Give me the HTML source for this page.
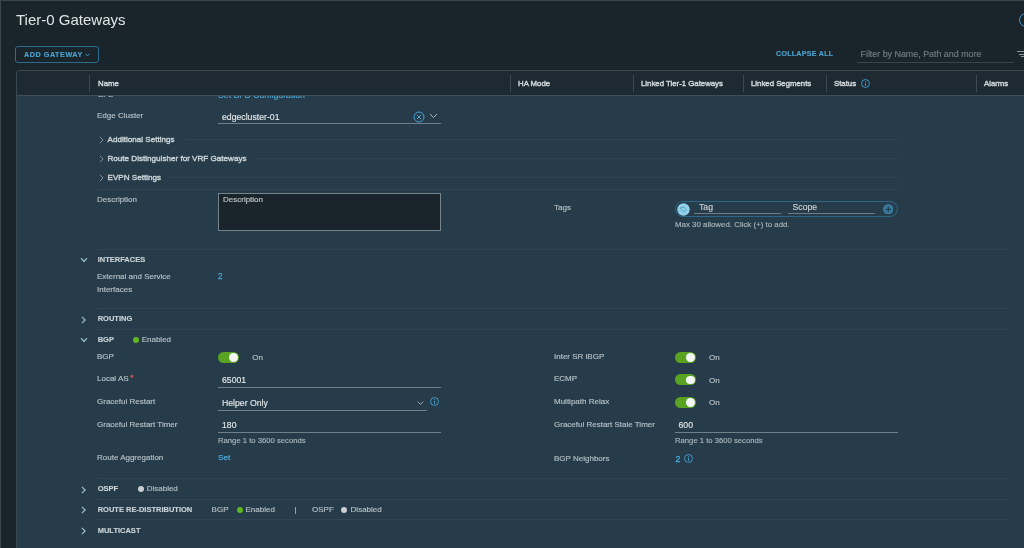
<!DOCTYPE html>
<html><head><meta charset="utf-8">
<style>
*{box-sizing:border-box;margin:0;padding:0}
html,body{width:1024px;height:548px;overflow:hidden;background:#1a242b;font-family:"Liberation Sans",sans-serif}
#root{position:absolute;left:0;top:0;width:1024px;height:548px;background:#1a242b;overflow:hidden;will-change:transform}
.a{position:absolute;white-space:nowrap;line-height:1;-webkit-text-stroke:0.15px currentColor}
svg{display:block}
</style></head><body>
<div id="root">
<div style="position:absolute;left:0px;top:0px;width:1024px;height:1px;background:#3a454c"></div>
<div style="position:absolute;left:0px;top:0px;width:1px;height:548px;background:#3a454c"></div>
<div class="a" style="left:16px;top:12.20px;font-size:15px;color:#e1e5e8;-webkit-text-stroke:0">Tier-0 Gateways</div>
<div style="position:absolute;left:1019.3px;top:12.8px;width:14px;height:14px;border:1.3px solid #3f9acb;border-radius:50%"></div>
<div style="position:absolute;left:15px;top:46px;width:84px;height:17px;border:1px solid #2c6d8f;border-radius:3px"></div>
<div class="a" style="left:24px;top:50.71px;font-size:7.2px;color:#4aa3d0;font-weight:bold;letter-spacing:0.55px">ADD GATEWAY</div>
<svg style="position:absolute;left:85px;top:52.5px" width="5" height="4" viewBox="0 0 5 4"><path d="M0.6 0.8 L2.5 2.8 L4.4 0.8" fill="none" stroke="#4aa3d0" stroke-width="0.9"/></svg>
<div class="a" style="left:776px;top:50.07px;font-size:7px;color:#4aa3d0;font-weight:bold;letter-spacing:0.33px">COLLAPSE ALL</div>
<div class="a" style="left:860.5px;top:49.97px;font-size:8.9px;color:#727d83;">Filter by Name, Path and more</div>
<div style="position:absolute;left:857px;top:61.5px;width:157px;height:1px;background:#39444b"></div>
<div style="position:absolute;left:1017px;top:51px;width:10px;height:1px;background:#8d989e"></div>
<div style="position:absolute;left:1019px;top:53.5px;width:8px;height:1px;background:#8d989e"></div>
<div style="position:absolute;left:1021px;top:56px;width:6px;height:1px;background:#8d989e"></div>
<div style="position:absolute;left:16px;top:70px;width:1040px;height:520px;border:1px solid #3a4a54;border-radius:3px;background:#263c4a"></div>
<div style="position:absolute;left:17px;top:71px;width:1030px;height:24px;background:#1d2a32;border-radius:2px 0 0 0"></div>
<div style="position:absolute;left:17px;top:95px;width:1030px;height:1px;background:#3d4f5a"></div>
<div style="position:absolute;left:89px;top:75px;width:1px;height:17px;background:#3b4952"></div>
<div style="position:absolute;left:510px;top:75px;width:1px;height:17px;background:#3b4952"></div>
<div style="position:absolute;left:633px;top:75px;width:1px;height:17px;background:#3b4952"></div>
<div style="position:absolute;left:743px;top:75px;width:1px;height:17px;background:#3b4952"></div>
<div style="position:absolute;left:826px;top:75px;width:1px;height:17px;background:#3b4952"></div>
<div style="position:absolute;left:976px;top:75px;width:1px;height:17px;background:#3b4952"></div>
<div class="a" style="left:98px;top:79.70px;font-size:7.8px;color:#cdd4d8;-webkit-text-stroke:0.45px currentColor">Name</div>
<div class="a" style="left:518px;top:79.70px;font-size:7.8px;color:#cdd4d8;-webkit-text-stroke:0.45px currentColor">HA Mode</div>
<div class="a" style="left:641px;top:79.70px;font-size:7.8px;color:#cdd4d8;-webkit-text-stroke:0.45px currentColor">Linked Tier-1 Gateways</div>
<div class="a" style="left:751px;top:79.70px;font-size:7.8px;color:#cdd4d8;-webkit-text-stroke:0.45px currentColor">Linked Segments</div>
<div class="a" style="left:834px;top:79.70px;font-size:7.8px;color:#cdd4d8;-webkit-text-stroke:0.45px currentColor">Status</div>
<div class="a" style="left:984px;top:79.70px;font-size:7.8px;color:#cdd4d8;-webkit-text-stroke:0.45px currentColor">Alarms</div>
<svg style="position:absolute;left:860.5px;top:78.8px" width="9" height="9" viewBox="0 0 10 10"><circle cx="5" cy="5" r="4.4" fill="none" stroke="#47a4d4" stroke-width="1"/><path d="M5 4.3 V7.6" stroke="#47a4d4" stroke-width="1"/><circle cx="5" cy="2.9" r="0.6" fill="#47a4d4"/></svg>
<div style="position:absolute;left:17px;top:96px;width:1010px;height:8px;overflow:hidden">
<div class="a" style="left:81px;top:-4.67px;font-size:8px;color:#b6c1c7;">BFD</div>
<div class="a" style="left:201px;top:-5.26px;font-size:8.7px;color:#4ba6d3;">Set BFD Configuration</div>
</div>
<div class="a" style="left:97px;top:111.78px;font-size:8px;color:#b6c1c7;">Edge Cluster</div>
<div class="a" style="left:222px;top:112.54px;font-size:8.7px;color:#e2e6e8;">edgecluster-01</div>
<div style="position:absolute;left:218px;top:123px;width:223px;height:1px;background:#6f808a"></div>
<svg style="position:absolute;left:413px;top:110.5px" width="12" height="12" viewBox="0 0 12 12"><circle cx="6" cy="6" r="5" fill="none" stroke="#47a4d4" stroke-width="1"/><path d="M4 4 L8 8 M8 4 L4 8" stroke="#47a4d4" stroke-width="1"/></svg>
<svg style="position:absolute;left:429px;top:113px" width="9" height="6" viewBox="0 0 9 6"><path d="M1 1 L4.5 4.5 L8 1" fill="none" stroke="#a9b5bb" stroke-width="1"/></svg>
<svg style="position:absolute;left:99.2px;top:135.8px" width="6" height="8" viewBox="0 0 6 8"><path d="M0.9 0.9 L4.1 4 L0.9 7.1" fill="none" stroke="#8e9ea7" stroke-width="0.9"/></svg>
<div class="a" style="left:107.5px;top:136.04px;font-size:8.1px;color:#c9d2d6;-webkit-text-stroke:0.4px currentColor">Additional Settings</div>
<div style="position:absolute;left:186px;top:139.3px;width:712px;height:1px;background:#30454f"></div>
<svg style="position:absolute;left:99.2px;top:154.5px" width="6" height="8" viewBox="0 0 6 8"><path d="M0.9 0.9 L4.1 4 L0.9 7.1" fill="none" stroke="#8e9ea7" stroke-width="0.9"/></svg>
<div class="a" style="left:107.5px;top:154.74px;font-size:8.1px;color:#c9d2d6;-webkit-text-stroke:0.4px currentColor">Route Distinguisher for VRF Gateways</div>
<div style="position:absolute;left:255px;top:158px;width:643px;height:1px;background:#30454f"></div>
<svg style="position:absolute;left:99.2px;top:173.5px" width="6" height="8" viewBox="0 0 6 8"><path d="M0.9 0.9 L4.1 4 L0.9 7.1" fill="none" stroke="#8e9ea7" stroke-width="0.9"/></svg>
<div class="a" style="left:107.5px;top:173.74px;font-size:8.1px;color:#c9d2d6;-webkit-text-stroke:0.4px currentColor">EVPN Settings</div>
<div style="position:absolute;left:168px;top:177px;width:730px;height:1px;background:#30454f"></div>
<div style="position:absolute;left:97px;top:189px;width:801px;height:1px;background:#30454f"></div>
<div class="a" style="left:97px;top:195.93px;font-size:8px;color:#b6c1c7;">Description</div>
<div style="position:absolute;left:218px;top:193px;width:223px;height:38px;background:#1a242b;border:1px solid #75838b"></div>
<div class="a" style="left:223px;top:195.93px;font-size:8px;color:#c0c7cb;">Description</div>
<div class="a" style="left:554px;top:203.93px;font-size:8px;color:#b6c1c7;">Tags</div>
<div style="position:absolute;left:675px;top:200.5px;width:223px;height:16.5px;border:1.2px solid #2e6786;border-radius:9px"></div>
<svg style="position:absolute;left:676.5px;top:202.5px" width="13" height="13" viewBox="0 0 13 13"><circle cx="6.5" cy="6.5" r="6.2" fill="#8fd0ea"/><path d="M4 4.2 L7 4.2 L9.3 6.6 L6.8 9.1 L4 6.3 Z" fill="none" stroke="#4d8fae" stroke-width="0.8"/></svg>
<div class="a" style="left:699px;top:203.04px;font-size:8.7px;color:#c9d0d3;">Tag</div>
<div style="position:absolute;left:694px;top:213px;width:87px;height:1px;background:#6f7c82"></div>
<div class="a" style="left:792.5px;top:203.04px;font-size:8.7px;color:#c9d0d3;">Scope</div>
<div style="position:absolute;left:788px;top:213px;width:87px;height:1px;background:#6f7c82"></div>
<svg style="position:absolute;left:882.5px;top:203.5px" width="10.5" height="10.5" viewBox="0 0 10 10"><circle cx="5" cy="5" r="5" fill="#37799d"/><path d="M5 2.3 V7.7 M2.3 5 H7.7" stroke="#20394a" stroke-width="1.1"/></svg>
<div class="a" style="left:675px;top:221.31px;font-size:7.9px;color:#aab6bc;">Max 30 allowed. Click (+) to add.</div>
<div style="position:absolute;left:97px;top:249px;width:911px;height:1px;background:#30454f"></div>
<svg style="position:absolute;left:80.3px;top:257px" width="8" height="6" viewBox="0 0 8 6"><path d="M1 1.2 L4 4.5 L7 1.2" fill="none" stroke="#9fc0cc" stroke-width="1.2"/></svg>
<div class="a" style="left:97.7px;top:255.65px;font-size:7.5px;color:#c9d2d6;font-weight:bold;">INTERFACES</div>
<div class="a" style="left:97px;top:273.23px;font-size:8px;color:#b6c1c7;">External and Service</div>
<div class="a" style="left:97px;top:285.93px;font-size:8px;color:#b6c1c7;">Interfaces</div>
<div class="a" style="left:218px;top:272.86px;font-size:8.2px;color:#4ba6d3;-webkit-text-stroke:0.25px currentColor">2</div>
<div style="position:absolute;left:97px;top:308px;width:911px;height:1px;background:#30454f"></div>
<svg style="position:absolute;left:81px;top:315.7px" width="6" height="8" viewBox="0 0 6 8"><path d="M0.9 0.9 L4.1 4 L0.9 7.1" fill="none" stroke="#9fc0cc" stroke-width="1.2"/></svg>
<div class="a" style="left:97.7px;top:315.45px;font-size:7.5px;color:#c9d2d6;font-weight:bold;">ROUTING</div>
<div style="position:absolute;left:97px;top:329px;width:911px;height:1px;background:#30454f"></div>
<svg style="position:absolute;left:80.2px;top:336.8px" width="8" height="6" viewBox="0 0 8 6"><path d="M1 1.2 L4 4.5 L7 1.2" fill="none" stroke="#9fc0cc" stroke-width="1.2"/></svg>
<div class="a" style="left:97.7px;top:335.95px;font-size:7.5px;color:#c9d2d6;font-weight:bold;">BGP</div>
<div style="position:absolute;left:132.5px;top:336.5px;width:6.5px;height:6.5px;background:#5fb81d;border-radius:50%"></div>
<div class="a" style="left:141.7px;top:336.43px;font-size:8px;color:#b6c1c7;">Enabled</div>
<div class="a" style="left:97px;top:352.93px;font-size:8px;color:#b6c1c7;">BGP</div>
<div style="position:absolute;left:218.2px;top:351.8px;width:21px;height:11px;background:#5aa221;border-radius:6px"></div>
<div style="position:absolute;left:229.0px;top:352.90000000000003px;width:8.8px;height:8.8px;background:#f4f6f6;border-radius:50%"></div>
<div class="a" style="left:252.2px;top:353.93px;font-size:8px;color:#b6c1c7;">On</div>
<div class="a" style="left:97px;top:375.33px;font-size:8px;color:#b6c1c7;">Local AS</div>
<div class="a" style="left:130.2px;top:374.13px;font-size:8px;color:#e65a5a;-webkit-text-stroke:0.3px currentColor">*</div>
<div class="a" style="left:222px;top:376.34px;font-size:8.7px;color:#e2e6e8;">65001</div>
<div style="position:absolute;left:218px;top:387px;width:223px;height:1px;background:#6f808a"></div>
<div class="a" style="left:97px;top:397.93px;font-size:8px;color:#b6c1c7;">Graceful Restart</div>
<div class="a" style="left:222px;top:398.64px;font-size:8.7px;color:#e2e6e8;">Helper Only</div>
<div style="position:absolute;left:218px;top:409.5px;width:209px;height:1px;background:#6f808a"></div>
<svg style="position:absolute;left:416.5px;top:400.5px" width="7" height="4" viewBox="0 0 7 4"><path d="M0.7 0.7 L3.5 3.3 L6.3 0.7" fill="none" stroke="#a9b5bb" stroke-width="0.9"/></svg>
<svg style="position:absolute;left:430.0px;top:397.3px" width="9" height="9" viewBox="0 0 10 10"><circle cx="5" cy="5" r="4.4" fill="none" stroke="#47a4d4" stroke-width="1"/><path d="M5 4.3 V7.6" stroke="#47a4d4" stroke-width="1"/><circle cx="5" cy="2.9" r="0.6" fill="#47a4d4"/></svg>
<div class="a" style="left:97px;top:420.83px;font-size:8px;color:#b6c1c7;">Graceful Restart Timer</div>
<div class="a" style="left:222px;top:421.34px;font-size:8.7px;color:#e2e6e8;">180</div>
<div style="position:absolute;left:218px;top:432px;width:223px;height:1px;background:#6f808a"></div>
<div class="a" style="left:218px;top:437.48px;font-size:7.7px;color:#aab6bc;">Range 1 to 3600 seconds</div>
<div class="a" style="left:97px;top:454.43px;font-size:8px;color:#b6c1c7;">Route Aggregation</div>
<div class="a" style="left:218px;top:454.44px;font-size:8.1px;color:#4ba6d3;-webkit-text-stroke:0.25px currentColor">Set</div>
<div class="a" style="left:554px;top:352.93px;font-size:8px;color:#b6c1c7;">Inter SR iBGP</div>
<div style="position:absolute;left:675px;top:351.8px;width:21px;height:11px;background:#5aa221;border-radius:6px"></div>
<div style="position:absolute;left:685.8px;top:352.90000000000003px;width:8.8px;height:8.8px;background:#f4f6f6;border-radius:50%"></div>
<div class="a" style="left:709px;top:353.93px;font-size:8px;color:#b6c1c7;">On</div>
<div class="a" style="left:554px;top:375.13px;font-size:8px;color:#b6c1c7;">ECMP</div>
<div style="position:absolute;left:675px;top:374.4px;width:21px;height:11px;background:#5aa221;border-radius:6px"></div>
<div style="position:absolute;left:685.8px;top:375.5px;width:8.8px;height:8.8px;background:#f4f6f6;border-radius:50%"></div>
<div class="a" style="left:709px;top:376.53px;font-size:8px;color:#b6c1c7;">On</div>
<div class="a" style="left:554px;top:397.93px;font-size:8px;color:#b6c1c7;">Multipath Relax</div>
<div style="position:absolute;left:675px;top:396.9px;width:21px;height:11px;background:#5aa221;border-radius:6px"></div>
<div style="position:absolute;left:685.8px;top:398.0px;width:8.8px;height:8.8px;background:#f4f6f6;border-radius:50%"></div>
<div class="a" style="left:709px;top:399.03px;font-size:8px;color:#b6c1c7;">On</div>
<div class="a" style="left:554px;top:420.73px;font-size:8px;color:#b6c1c7;">Graceful Restart Stale Timer</div>
<div class="a" style="left:678.5px;top:421.34px;font-size:8.7px;color:#e2e6e8;">600</div>
<div style="position:absolute;left:675px;top:432px;width:223px;height:1px;background:#6f808a"></div>
<div class="a" style="left:675px;top:437.48px;font-size:7.7px;color:#aab6bc;">Range 1 to 3600 seconds</div>
<div class="a" style="left:554px;top:454.63px;font-size:8px;color:#b6c1c7;">BGP Neighbors</div>
<div class="a" style="left:675.4px;top:454.64px;font-size:8.7px;color:#4ba6d3;-webkit-text-stroke:0.35px currentColor">2</div>
<svg style="position:absolute;left:683.5px;top:454.2px" width="9" height="9" viewBox="0 0 10 10"><circle cx="5" cy="5" r="4.4" fill="none" stroke="#47a4d4" stroke-width="1"/><path d="M5 4.3 V7.6" stroke="#47a4d4" stroke-width="1"/><circle cx="5" cy="2.9" r="0.6" fill="#47a4d4"/></svg>
<div style="position:absolute;left:97px;top:478px;width:911px;height:1px;background:#30454f"></div>
<svg style="position:absolute;left:81.1px;top:485.5px" width="6" height="8" viewBox="0 0 6 8"><path d="M0.9 0.9 L4.1 4 L0.9 7.1" fill="none" stroke="#9fc0cc" stroke-width="1.2"/></svg>
<div class="a" style="left:97.7px;top:484.65px;font-size:7.5px;color:#c9d2d6;font-weight:bold;">OSPF</div>
<div style="position:absolute;left:138px;top:485.5px;width:6px;height:6px;background:#c9cfd2;border-radius:50%"></div>
<div class="a" style="left:146.7px;top:485.23px;font-size:8px;color:#b6c1c7;">Disabled</div>
<div style="position:absolute;left:97px;top:499px;width:911px;height:1px;background:#30454f"></div>
<svg style="position:absolute;left:81.1px;top:506.1px" width="6" height="8" viewBox="0 0 6 8"><path d="M0.9 0.9 L4.1 4 L0.9 7.1" fill="none" stroke="#9fc0cc" stroke-width="1.2"/></svg>
<div class="a" style="left:97.7px;top:505.65px;font-size:7.5px;color:#c9d2d6;font-weight:bold;">ROUTE RE-DISTRIBUTION</div>
<div class="a" style="left:211.6px;top:506.23px;font-size:8px;color:#b6c1c7;">BGP</div>
<div style="position:absolute;left:236.7px;top:506.5px;width:6px;height:6px;background:#5fb81d;border-radius:50%"></div>
<div class="a" style="left:245.5px;top:506.23px;font-size:8px;color:#b6c1c7;">Enabled</div>
<div class="a" style="left:294.5px;top:506.23px;font-size:8px;color:#b6c1c7;">|</div>
<div class="a" style="left:312px;top:506.23px;font-size:8px;color:#b6c1c7;">OSPF</div>
<div style="position:absolute;left:341px;top:506.5px;width:6px;height:6px;background:#c9cfd2;border-radius:50%"></div>
<div class="a" style="left:350.6px;top:506.23px;font-size:8px;color:#b6c1c7;">Disabled</div>
<div style="position:absolute;left:97px;top:519px;width:911px;height:1px;background:#30454f"></div>
<svg style="position:absolute;left:81.1px;top:526.9px" width="6" height="8" viewBox="0 0 6 8"><path d="M0.9 0.9 L4.1 4 L0.9 7.1" fill="none" stroke="#9fc0cc" stroke-width="1.2"/></svg>
<div class="a" style="left:97.7px;top:526.65px;font-size:7.5px;color:#c9d2d6;font-weight:bold;">MULTICAST</div>
</div>
</body></html>
